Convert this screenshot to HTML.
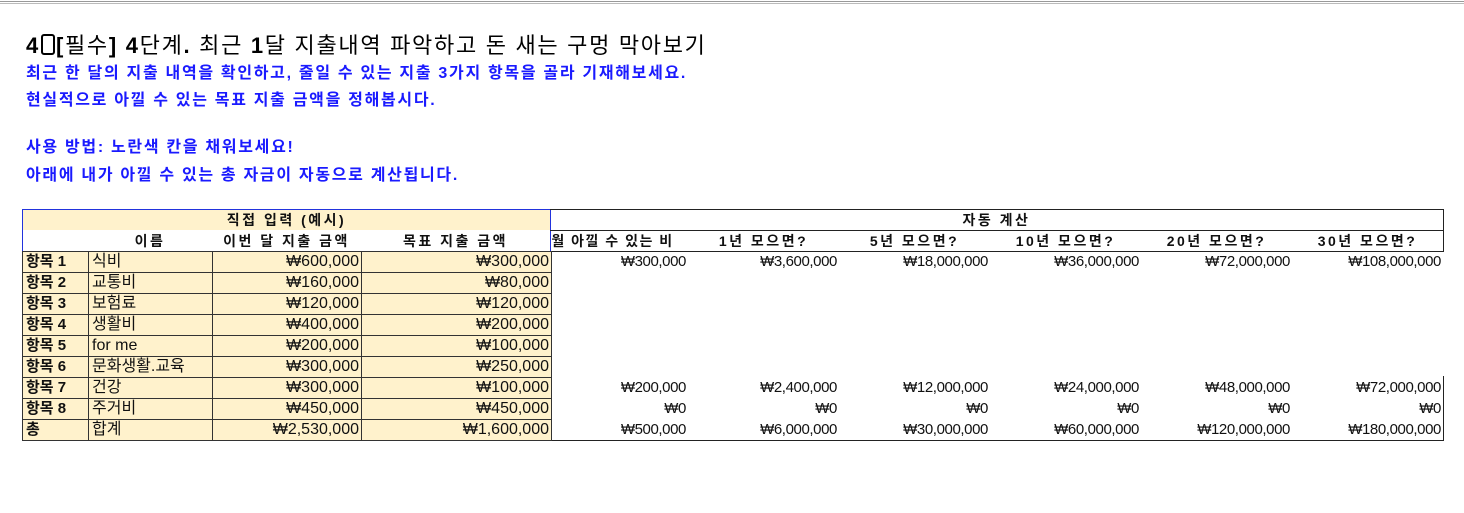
<!DOCTYPE html>
<html><head><meta charset="utf-8"><style>
body{margin:0;width:1464px;height:513px;background:#fff;position:relative;overflow:hidden;font-family:"Liberation Sans","Noto Sans CJK KR",sans-serif;}
.a{position:absolute;white-space:nowrap}
.t{font-size:22px;color:#000;letter-spacing:1.7px}
.b{font-size:16px;font-weight:bold;color:#1a1aff;letter-spacing:1.7px}
.c{position:absolute;box-sizing:border-box;font-size:14px;line-height:20px;white-space:nowrap;color:#111}
.y{background:#fff2cc;border:1px solid #333;font-size:16px;}
.r{text-align:right;padding-right:2px}
.l{padding-left:3px}
.h{font-weight:bold;text-align:center;letter-spacing:2.5px;font-size:14px}
.v{letter-spacing:-0.4px}
</style></head><body>
<div class="a" style="left:0;top:1px;width:1464px;height:1px;background:#999"></div>
<div class="a" style="left:0;top:3px;width:1464px;height:1px;background:#bbb"></div>
<div class="a t" style="left:26px;top:28px"><b>4</b><span style="display:inline-block;width:10px;height:17px;border:2px solid #000;border-radius:3px;vertical-align:-2px;margin:0 1px"></span><b>[</b>필수<b>] 4</b>단계<b>.</b> 최근 <b>1</b>달 지출내역 파악하고 돈 새는 구멍 막아보기</div>
<div class="a b" style="left:26px;top:59px">최근 한 달의 지출 내역을 확인하고, 줄일 수 있는 지출 3가지 항목을 골라 기재해보세요.</div>
<div class="a b" style="left:26px;top:86px">현실적으로 아낄 수 있는 목표 지출 금액을 정해봅시다.</div>
<div class="a b" style="left:26px;top:133px">사용 방법: 노란색 칸을 채워보세요!</div>
<div class="a b" style="left:26px;top:161px">아래에 내가 아낄 수 있는 총 자금이 자동으로 계산됩니다.</div>

<div class="c h" style="left:22px;top:209px;width:529px;height:21px;background:#fff2cc;border:1px solid #2233dd;border-bottom:none">직접 입력 (예시)</div>
<div class="c" style="left:22px;top:230px;width:529px;height:22px;background:#fff;border:1px solid #2233dd;border-top:none"></div>
<div class="c h" style="left:88px;top:231px;width:124px">이름</div>
<div class="c h" style="left:212px;top:231px;width:149px">이번 달 지출 금액</div>
<div class="c h" style="left:361px;top:231px;width:189px">목표 지출 금액</div>
<div class="c h" style="left:550px;top:209px;width:894px;height:22px;border:1px solid #222;border-left:none">자동 계산</div>
<div class="c" style="left:550px;top:230px;width:894px;height:22px;border-right:1px solid #222;border-bottom:1px solid #222"></div>
<div class="c h" style="left:537px;top:231px;width:151px;letter-spacing:1.5px">월 아낄 수 있는 비</div>
<div class="c h" style="left:688px;top:231px;width:151px">1년 모으면?</div>
<div class="c h" style="left:839px;top:231px;width:151px">5년 모으면?</div>
<div class="c h" style="left:990px;top:231px;width:151px">10년 모으면?</div>
<div class="c h" style="left:1141px;top:231px;width:151px">20년 모으면?</div>
<div class="c h" style="left:1292px;top:231px;width:151px">30년 모으면?</div>
<div class="c" style="left:550px;top:376px;width:894px;height:65px;border-right:1px solid #222;border-bottom:1px solid #222"></div>

<div id="rows"></div>
<script>
var d=[["항목 1","식비","₩600,000","₩300,000",["₩300,000","₩3,600,000","₩18,000,000","₩36,000,000","₩72,000,000","₩108,000,000"]],
["항목 2","교통비","₩160,000","₩80,000",null],
["항목 3","보험료","₩120,000","₩120,000",null],
["항목 4","생활비","₩400,000","₩200,000",null],
["항목 5","for me","₩200,000","₩100,000",null],
["항목 6","문화생활.교육","₩300,000","₩250,000",null],
["항목 7","건강","₩300,000","₩100,000",["₩200,000","₩2,400,000","₩12,000,000","₩24,000,000","₩48,000,000","₩72,000,000"]],
["항목 8","주거비","₩450,000","₩450,000",["₩0","₩0","₩0","₩0","₩0","₩0"]],
["총","합계","₩2,530,000","₩1,600,000",["₩500,000","₩6,000,000","₩30,000,000","₩60,000,000","₩120,000,000","₩180,000,000"]]];
var h="",xs=[22,88,212,361,551],rx=[688,839,990,1141,1292,1443];
d.forEach(function(r,i){var y=251+i*21;
for(var k=0;k<4;k++){h+='<div class="c y '+(k<2?'l':'r')+'" style="left:'+xs[k]+'px;top:'+y+'px;width:'+(xs[k+1]-xs[k]+1)+'px;height:22px;'+(k==0?'font-weight:bold;font-size:15px':'')+'">'+r[k]+'</div>';}
if(r[4])r[4].forEach(function(v,j){h+='<div class="c r v" style="left:'+(rx[j]-151)+'px;top:'+(y+1)+'px;width:151px;font-size:15px">'+v+'</div>';});});
document.getElementById("rows").innerHTML=h;
</script>
</body></html>
